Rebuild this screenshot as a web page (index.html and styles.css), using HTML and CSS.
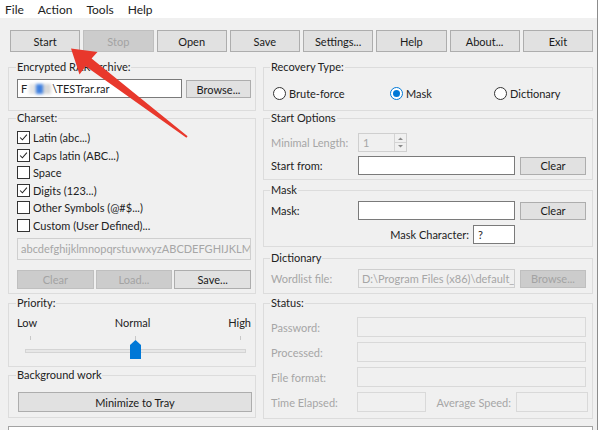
FILE: index.html
```html
<!DOCTYPE html>
<html lang="en">
<head>
    <meta charset="UTF-8">
    <title>RAR Password Recovery</title>
    <link rel="stylesheet" href="styles.css">
</head>
<body>
    <div class="app">
        <div class="menubar">
            <span>File</span>
            <span>Action</span>
            <span>Tools</span>
            <span>Help</span>
        </div>

        <div class="toolbar">
            <button class="btn">Start</button>
            <button class="btn off">Stop</button>
            <button class="btn">Open</button>
            <button class="btn">Save</button>
            <button class="btn">Settings...</button>
            <button class="btn">Help</button>
            <button class="btn">About...</button>
            <button class="btn">Exit</button>
        </div>

        <div class="main">
            <div class="col left">
                <fieldset class="grp g-archive">
                    <legend>Encrypted RAR archive:</legend>
                    <div class="row">
                        <div class="field path">F<span class="smudge"></span>\TESTrar.rar</div>
                        <button class="btn browse">Browse...</button>
                    </div>
                </fieldset>

                <fieldset class="grp g-charset">
                    <legend>Charset:</legend>
                    <div class="checks">
                        <div class="check"><span class="box on"><svg viewBox="0 0 13 13"><path d="M2.5 6.5 L5.2 9.3 L10.5 3.2" /></svg></span>Latin (abc...)</div>
                        <div class="check"><span class="box on"><svg viewBox="0 0 13 13"><path d="M2.5 6.5 L5.2 9.3 L10.5 3.2" /></svg></span>Caps latin (ABC...)</div>
                        <div class="check"><span class="box"></span>Space</div>
                        <div class="check"><span class="box on"><svg viewBox="0 0 13 13"><path d="M2.5 6.5 L5.2 9.3 L10.5 3.2" /></svg></span>Digits (123...)</div>
                        <div class="check"><span class="box"></span>Other Symbols (@#$...)</div>
                        <div class="check"><span class="box"></span>Custom (User Defined)...</div>
                    </div>
                    <div class="field off charset-text">abcdefghijklmnopqrstuvwxyzABCDEFGHIJKLMNO</div>
                    <div class="btnrow">
                        <button class="btn off">Clear</button>
                        <button class="btn off">Load...</button>
                        <button class="btn">Save...</button>
                    </div>
                </fieldset>

                <fieldset class="grp g-priority">
                    <legend>Priority:</legend>
                    <div class="levels">
                        <span>Low</span>
                        <span>Normal</span>
                        <span>High</span>
                    </div>
                    <svg class="slider" width="234" height="30" viewBox="0 0 234 30">
                        <rect x="13" y="6" width="1" height="4" fill="#c8c8c8" />
                        <rect x="118" y="6" width="1" height="4" fill="#c8c8c8" />
                        <rect x="223" y="6" width="1" height="4" fill="#c8c8c8" />
                        <rect x="8.5" y="19.5" width="220" height="3" fill="#e7e7e7" stroke="#d4d4d4" />
                        <polygon points="118.5,10 124,15 124,29 113,29 113,15" fill="#0078d7" />
                    </svg>
                </fieldset>

                <fieldset class="grp g-background">
                    <legend>Background work</legend>
                    <button class="btn tray">Minimize to Tray</button>
                </fieldset>
            </div>

            <div class="col right">
                <fieldset class="grp g-recovery">
                    <legend>Recovery Type:</legend>
                    <div class="radios">
                        <div class="radio"><span class="dot"></span>Brute-force</div>
                        <div class="radio"><span class="dot on"></span>Mask</div>
                        <div class="radio"><span class="dot"></span>Dictionary</div>
                    </div>
                </fieldset>

                <fieldset class="grp g-start">
                    <legend>Start Options</legend>
                    <div class="frow">
                        <label class="muted">Minimal Length:</label>
                        <div class="spin">
                            <span>1</span>
                            <div class="arrows">
                                <svg width="11" height="17" viewBox="0 0 11 17">
                                    <path d="M3 6 L5.5 3.5 L8 6 Z" fill="#8a8a8a" />
                                    <line x1="0" y1="8.5" x2="11" y2="8.5" stroke="#d4d4d4" />
                                    <path d="M3 11 L5.5 13.5 L8 11 Z" fill="#8a8a8a" />
                                </svg>
                            </div>
                        </div>
                    </div>
                    <div class="frow gap">
                        <label>Start from:</label>
                        <div class="field wide"></div>
                        <button class="btn side">Clear</button>
                    </div>
                </fieldset>

                <fieldset class="grp g-mask">
                    <legend>Mask</legend>
                    <div class="frow">
                        <label>Mask:</label>
                        <div class="field wide"></div>
                        <button class="btn side">Clear</button>
                    </div>
                    <div class="frow mask-char">
                        <label>Mask Character:</label>
                        <div class="field small">?</div>
                    </div>
                </fieldset>

                <fieldset class="grp g-dict">
                    <legend>Dictionary</legend>
                    <div class="frow">
                        <label class="muted">Wordlist file:</label>
                        <div class="field wide off">D:\Program Files (x86)\default_e</div>
                        <button class="btn side off">Browse...</button>
                    </div>
                </fieldset>

                <fieldset class="grp g-status">
                    <legend>Status:</legend>
                    <div class="srow"><label>Password:</label><div class="sbox"></div></div>
                    <div class="srow"><label>Processed:</label><div class="sbox"></div></div>
                    <div class="srow"><label>File format:</label><div class="sbox"></div></div>
                    <div class="srow">
                        <label>Time Elapsed:</label>
                        <div class="sbox time"></div>
                        <label class="speed">Average Speed:</label>
                        <div class="sbox rate"></div>
                    </div>
                </fieldset>
            </div>
        </div>

        <div class="log"></div>

        <!-- annotation arrow drawn over the window -->
        <svg class="arrow" width="600" height="430" viewBox="0 0 600 430">
            <polygon points="71,48.5 97.5,52 91.6,58.6 187.6,136.2 186.4,137.8 85.6,66.2 79.5,74.5" fill="#e8382c" />
        </svg>
    </div>
</body>
</html>
```

FILE: styles.css
```css
* {
    margin: 0;
    padding: 0;
    box-sizing: border-box;
}

body {
    width: 600px;
    height: 430px;
    overflow: hidden;
    background: #fff;
    font-family: Lato, "Liberation Sans", sans-serif;
    font-size: 11px;
    color: #222;
}

.app {
    position: relative;
    width: 598px;
    height: 430px;
    background: #f0f0f0;
    border-right: 1px solid #8c8c8c;
}

/* menu + toolbar */

.menubar {
    height: 18px;
    background: #fff;
    display: flex;
    align-items: center;
    gap: 14px;
    padding-left: 5px;
    font-size: 12px;
}

.toolbar {
    display: flex;
    gap: 3px;
    padding: 12px 4px 0 10px;
}

.toolbar .btn {
    flex: 1;
    height: 22px;
}

.btn {
    font: inherit;
    color: #1a1a1a;
    background: #e1e1e1;
    border: 1px solid #adadad;
    text-align: center;
    white-space: nowrap;
}

.btn.off {
    background: #cccccc;
    border-color: #bfbfbf;
    color: #a3a3a3;
}

/* columns */

.main {
    display: flex;
    gap: 7px;
    padding: 0 4px 0 8px;
    margin-top: 8px;
}

.col {
    display: flex;
    flex-direction: column;
}

.left {
    width: 248px;
}

.right {
    width: 330px;
}

.grp {
    border: 1px solid #dcdcdc;
    padding: 0 4px 0 8px;
    min-width: 0;
}

.right .grp {
    padding: 0 6px 0 7px;
}

.grp legend {
    padding: 0 1px;
    margin-left: -1px;
    line-height: 14px;
}

.g-archive { height: 51px; }
.g-charset { height: 183px; }
.g-priority { height: 71px; margin-top: 2px; }
.g-background { height: 50px; margin-top: 1px; }

.g-recovery { height: 51px; }
.g-start { height: 69px; }
.g-mask { height: 64px; margin-top: 3px; }
.g-dict { height: 43px; margin-top: 4px; }
.g-status { height: 123px; margin-top: 2px; }

.field {
    height: 19px;
    background: #fff;
    border: 1px solid #7a7a7a;
    padding: 0 3px;
    line-height: 17px;
    white-space: nowrap;
    overflow: hidden;
}

.field.off {
    background: #f0f0f0;
    border-color: #cfcfcf;
    color: #a6a6a6;
}

.muted {
    color: #a6a6a6;
}

/* archive */

.row {
    display: flex;
    align-items: flex-start;
    gap: 4px;
    margin-top: 5px;
}

.path {
    width: 165px;
}

.smudge {
    display: inline-block;
    width: 22px;
    height: 10px;
    margin: 0 1px 0 2px;
    vertical-align: -1px;
    background: linear-gradient(90deg, #e6e6e6 0 30%, #3d7fe0 30% 62%, #d8d8d8 62%);
    filter: blur(1.5px);
}

.browse {
    width: 65px;
    height: 18px;
    margin-top: 1px;
}

/* charset */

.checks {
    padding-top: 4px;
}

.check {
    display: flex;
    align-items: center;
    gap: 3px;
    height: 17.5px;
}

.box {
    width: 13px;
    height: 13px;
    background: #fff;
    border: 1px solid #333;
    flex-shrink: 0;
}

.box svg {
    display: block;
    width: 11px;
    height: 11px;
    fill: none;
    stroke: #222;
    stroke-width: 1.2;
}

.charset-text {
    height: 22px;
    line-height: 20px;
    margin-top: 4px;
    text-overflow: clip;
}

.btnrow {
    display: flex;
    gap: 2px;
    margin-top: 10px;
}

.btnrow .btn {
    flex: 1;
    height: 19px;
}

/* priority */

.levels {
    display: flex;
    justify-content: space-between;
    line-height: 14px;
    margin-top: 6px;
}

.slider {
    display: block;
}

.tray {
    width: 234px;
    height: 20px;
    margin: 10px 0 0 1px;
}

/* recovery type */

.radios {
    display: grid;
    grid-template-columns: 117px 104px 1fr;
    padding-top: 10px;
}

.radio {
    display: flex;
    align-items: center;
    gap: 3px;
    height: 18px;
}

.dot {
    width: 13px;
    height: 13px;
    margin-left: 2px;
    border: 1px solid #333;
    border-radius: 50%;
    background: #fff;
    display: flex;
    align-items: center;
    justify-content: center;
}

.dot.on {
    border-color: #0078d7;
}

.dot.on::after {
    content: "";
    width: 7px;
    height: 7px;
    border-radius: 50%;
    background: #0078d7;
}

/* option rows */

.frow {
    display: flex;
    align-items: center;
    height: 19px;
}

.g-start legend + .frow {
    margin-top: 8px;
}

.g-mask legend + .frow,
.g-dict legend + .frow {
    margin-top: 4px;
}

.frow.gap {
    margin-top: 4px;
}

.frow label {
    width: 87px;
    flex-shrink: 0;
}

.wide {
    width: 157px;
}

.side {
    width: 66px;
    height: 18px;
    margin-left: 5px;
}

.spin {
    width: 49px;
    height: 19px;
    display: flex;
    background: #f0f0f0;
    border: 1px solid #cfcfcf;
    color: #a6a6a6;
}

.spin span {
    flex: 1;
    padding-left: 4px;
    line-height: 17px;
}

.arrows {
    width: 12px;
    border-left: 1px solid #d4d4d4;
}

.arrows svg {
    display: block;
}

.mask-char {
    justify-content: flex-end;
    padding-right: 71px;
    margin-top: 5px;
}

.mask-char label {
    width: auto;
    margin-right: 4px;
}

.small {
    width: 42px;
    padding-left: 4px;
}

/* status */

.g-status legend + .srow {
    margin-top: 7px;
}

.srow {
    display: flex;
    align-items: center;
    height: 20px;
    margin-bottom: 5px;
    color: #a6a6a6;
}

.srow label {
    width: 86px;
    flex-shrink: 0;
}

.sbox {
    flex: 1;
    height: 20px;
    border: 1px solid #d9d9d9;
}

.sbox.time {
    flex: none;
    width: 69px;
}

.srow .speed {
    width: auto;
    margin-left: auto;
    margin-right: 5px;
}

.sbox.rate {
    flex: none;
    width: 72px;
    margin-right: -2px;
}

/* bottom panel */

.log {
    height: 20px;
    margin: 7px 4px 0 8px;
    background: #fff;
    border: 1px solid #a3a3a3;
}

.arrow {
    position: absolute;
    top: 0;
    left: 0;
    pointer-events: none;
}
```
